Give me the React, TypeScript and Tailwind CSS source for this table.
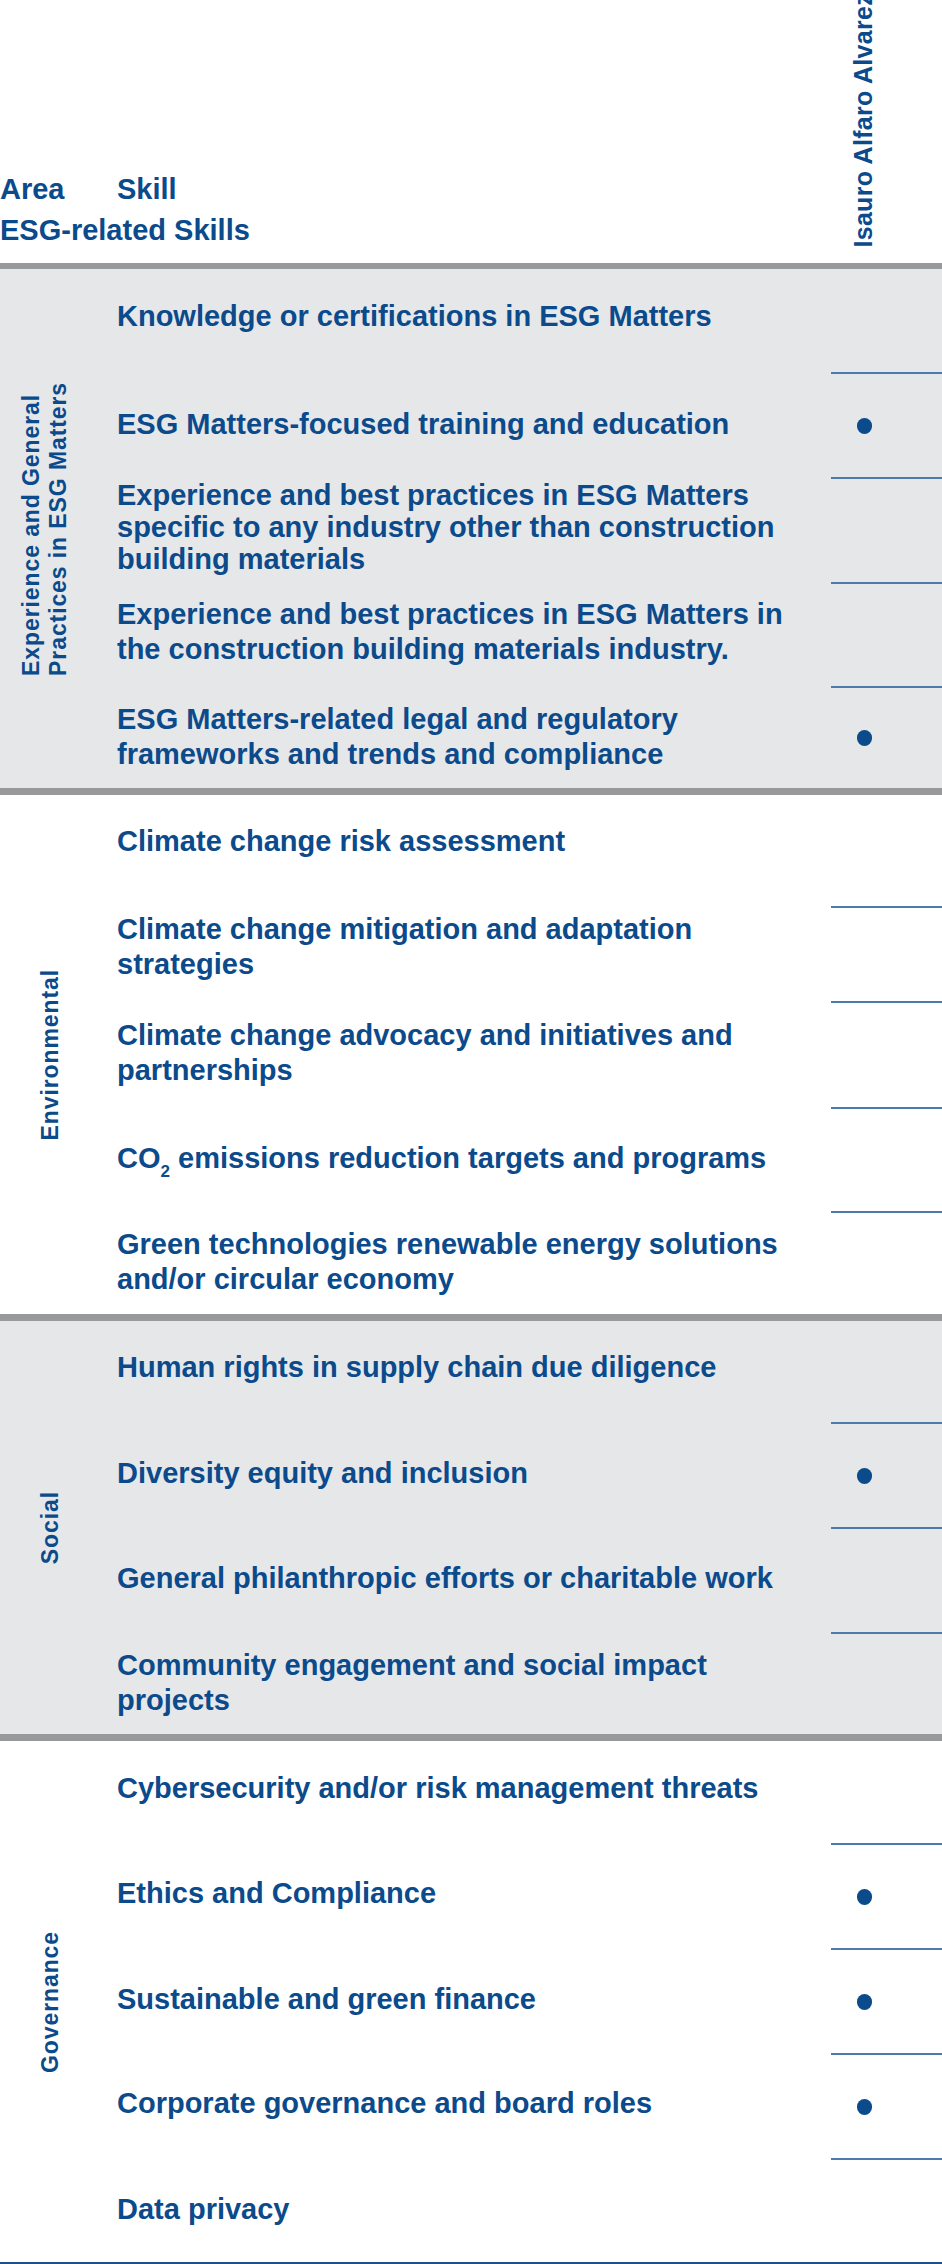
import React from 'react';

type Row = { text: React.ReactNode; h: string; dot?: boolean; shift?: string; lh?: string };
type Section = { label: React.ReactNode; gray: boolean; labelPad?: string; rows: Row[] };

const sections: Section[] = [
  {
    label: (
      <>
        Experience and General
        <br />
        Practices in ESG Matters
      </>
    ),
    gray: true,
    labelPad: 'pr-[10px]',
    rows: [
      { text: 'Knowledge or certifications in ESG Matters', h: 'h-[103px]', shift: 'pb-[8px]' },
      { text: 'ESG Matters-focused training and education', h: 'h-[105px]', dot: true },
      {
        text: (
          <>
            Experience and best practices in ESG Matters
            <br />
            specific to any industry other than construction
            <br />
            building materials
          </>
        ),
        h: 'h-[105px]',
        lh: 'leading-[32px]',
        shift: 'pb-[5px]',
      },
      {
        text: (
          <>
            Experience and best practices in ESG Matters in
            <br />
            the construction building materials industry.
          </>
        ),
        h: 'h-[104px]',
        shift: 'pb-[4px]',
      },
      {
        text: (
          <>
            ESG Matters-related legal and regulatory
            <br />
            frameworks and trends and compliance
          </>
        ),
        h: 'h-[102px]',
        dot: true,
      },
    ],
  },
  {
    label: 'Environmental',
    gray: false,
    rows: [
      { text: 'Climate change risk assessment', h: 'h-[111px]', shift: 'pb-[18px]' },
      {
        text: (
          <>
            Climate change mitigation and adaptation
            <br />
            strategies
          </>
        ),
        h: 'h-[95px]',
        shift: 'pb-[14px]',
      },
      {
        text: (
          <>
            Climate change advocacy and initiatives and
            <br />
            partnerships
          </>
        ),
        h: 'h-[106px]',
        shift: 'pb-[2px]',
      },
      {
        text: (
          <>
            CO<span className="relative top-[9px] text-[17px] leading-none">2</span> emissions reduction targets and programs
          </>
        ),
        h: 'h-[104px]',
        shift: 'pb-[2px]',
      },
      {
        text: (
          <>
            Green technologies renewable energy solutions
            <br />
            and/or circular economy
          </>
        ),
        h: 'h-[103px]',
        shift: 'pb-[1px]',
      },
    ],
  },
  {
    label: 'Social',
    gray: true,
    rows: [
      { text: 'Human rights in supply chain due diligence', h: 'h-[101px]', shift: 'pb-[8px]' },
      { text: 'Diversity equity and inclusion', h: 'h-[105px]', dot: true, shift: 'pb-[2px]' },
      { text: 'General philanthropic efforts or charitable work', h: 'h-[105px]', shift: 'pb-[2px]' },
      {
        text: (
          <>
            Community engagement and social impact
            <br />
            projects
          </>
        ),
        h: 'h-[102px]',
      },
    ],
  },
  {
    label: 'Governance',
    gray: false,
    rows: [
      { text: 'Cybersecurity and/or risk management threats', h: 'h-[102px]', shift: 'pb-[8px]' },
      { text: 'Ethics and Compliance', h: 'h-[105px]', dot: true, shift: 'pb-[4px]' },
      { text: 'Sustainable and green finance', h: 'h-[105px]', dot: true, shift: 'pb-[2px]' },
      { text: 'Corporate governance and board roles', h: 'h-[105px]', dot: true, shift: 'pb-[4px]' },
      { text: 'Data privacy', h: 'h-[104px]', shift: 'pb-[2px]' },
    ],
  },
];

function SectionBlock({ s }: { s: Section }) {
  return (
    <div className={`flex ${s.gray ? 'bg-[#e6e7e9]' : 'bg-white'}`}>
      <div className={`w-[100px] flex items-center justify-center ${s.labelPad ?? ''}`}>
        <div className="[writing-mode:vertical-rl] rotate-180 whitespace-nowrap text-start text-[23px] leading-[27px] tracking-[0.9px]">
          {s.label}
        </div>
      </div>
      <div className="flex-1 flex flex-col">
        {s.rows.map((r, i) => (
          <div key={i} className={`flex ${r.h}`}>
            <div
              className={`flex-1 flex items-center pl-[17px] whitespace-nowrap text-[29px] ${r.lh ?? 'leading-[35px]'} ${r.shift ?? ''}`}
            >
              <div>{r.text}</div>
            </div>
            <div
              className={`w-[111px] flex items-center pl-[26px] ${i > 0 ? 'border-t-2 border-[#4d7aad]' : ''}`}
            >
              {r.dot && <span className="block w-[15px] h-[16px] rounded-full bg-[#0b4a8b]" />}
            </div>
          </div>
        ))}
      </div>
    </div>
  );
}

export default function App() {
  return (
    <div className="w-[942px] h-[2264px] overflow-hidden bg-white font-['Liberation_Sans',Arial,sans-serif] font-bold text-[#0b4a8b]">
      <div className="flex h-[263px]">
        <div className="flex-1 flex flex-col justify-end pb-[12px] text-[29px] leading-[41px] whitespace-nowrap">
          <div className="flex">
            <span className="w-[117px]">Area</span>
            <span>Skill</span>
          </div>
          <div>ESG-related Skills</div>
        </div>
        <div className="w-[111px] flex flex-col justify-end items-start pl-[19px] pb-[15px] overflow-hidden">
          <div className="[writing-mode:vertical-rl] rotate-180 whitespace-nowrap text-[25px] leading-[26px] tracking-[0.3px]">
            Isauro Alfaro Alvarez
          </div>
        </div>
      </div>
      {sections.map((s, i) => (
        <React.Fragment key={i}>
          <div className={`${i === 0 ? 'h-[6px]' : 'h-[7px]'} bg-[#98999b]`} />
          <SectionBlock s={s} />
        </React.Fragment>
      ))}
      <div className="h-[2px] bg-[#1d4f8a]" />
    </div>
  );
}
